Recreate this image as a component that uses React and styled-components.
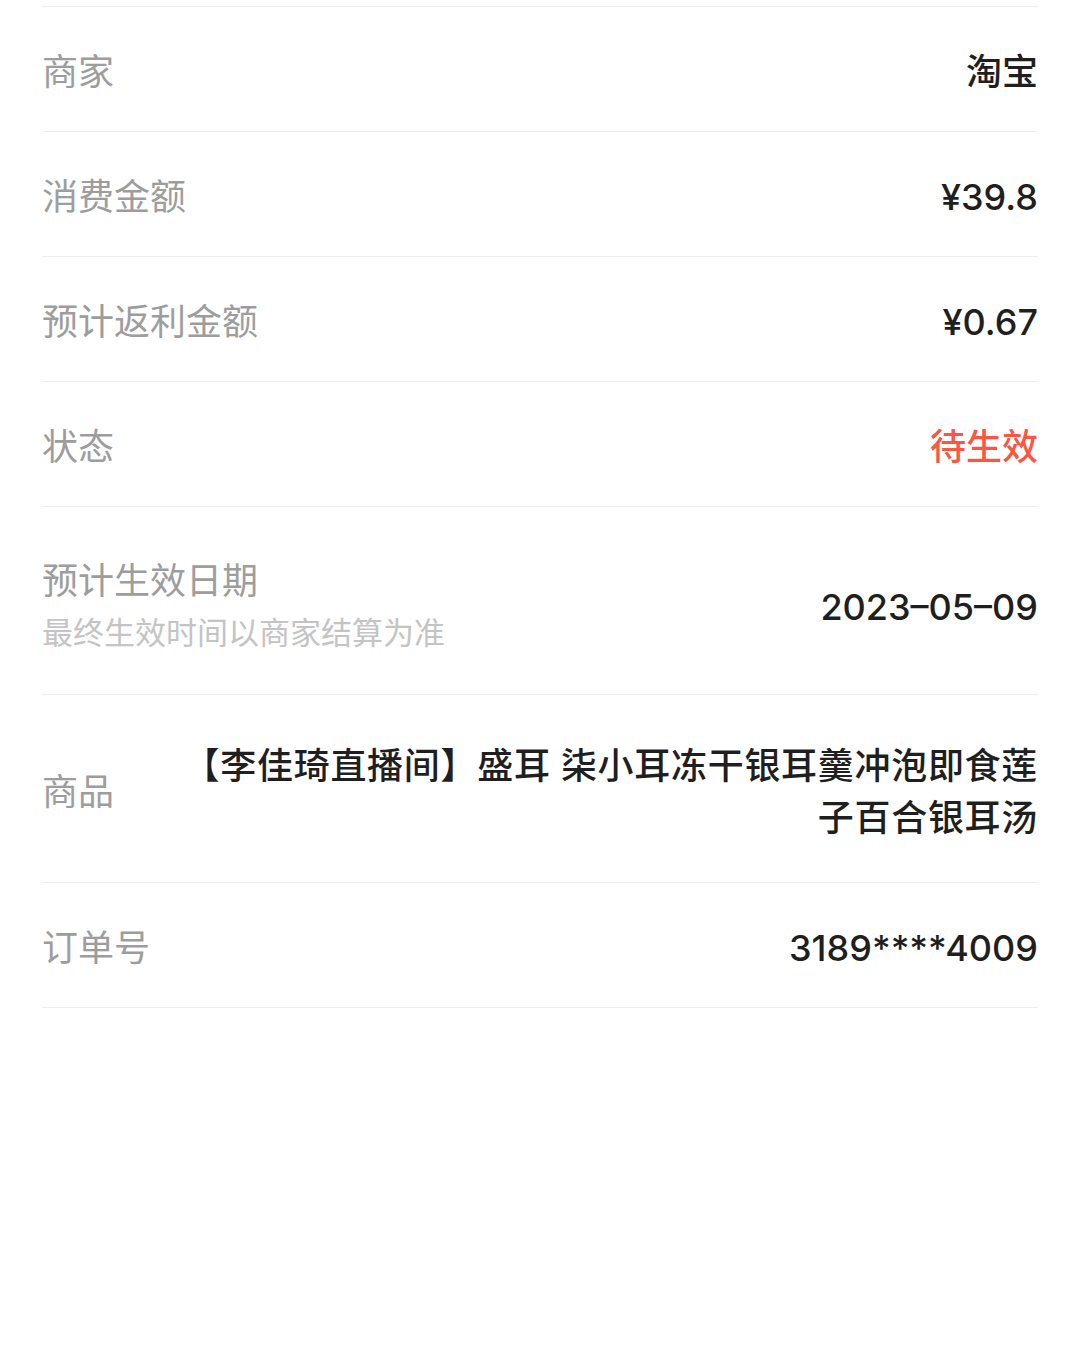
import React from "react";
import styled, { createGlobalStyle } from "styled-components";

const GlobalStyle = createGlobalStyle`
  body {
    margin: 0;
    background: #ffffff;
    font-family: Inter, "Noto Sans CJK SC", sans-serif;
  }
`;

const rows = [
  { label: "商家", value: "淘宝" },
  { label: "消费金额", value: "¥39.8" },
  { label: "预计返利金额", value: "¥0.67" },
  { label: "状态", value: "待生效", tone: "red" },
  {
    label: "预计生效日期",
    hint: "最终生效时间以商家结算为准",
    value: "2023–05–09",
    pad: "48px 0 35px",
  },
  {
    label: "商品",
    value: "【李佳琦直播间】盛耳 柒小耳冻干银耳羹冲泡即食莲子百合银耳汤",
    pad: "45px 0 38px",
    wrap: true,
  },
  { label: "订单号", value: "3189****4009" },
];

function App() {
  return (
    <>
      <GlobalStyle />
      <Page>
        <List>
          {rows.map((row) => (
            <Row key={row.label} $pad={row.pad}>
              <LabelBox>
                <Label>{row.label}</Label>
                {row.hint && <Hint>{row.hint}</Hint>}
              </LabelBox>
              <Value $tone={row.tone} $wrap={row.wrap}>
                {row.value}
              </Value>
            </Row>
          ))}
        </List>
      </Page>
    </>
  );
}

const Page = styled.div`
  padding: 6px 42px 0 42px;
  min-height: 1344px;
  background: #ffffff;
`;

const List = styled.div`
  border-top: 1px solid #ededed;
`;

const Row = styled.div`
  display: flex;
  align-items: center;
  justify-content: space-between;
  gap: 40px;
  box-sizing: border-box;
  min-height: ${(p) => (p.$pad ? "auto" : "125px")};
  padding: ${(p) => p.$pad || "6px 0 0"};
  border-bottom: 1px solid #ededed;
`;

const LabelBox = styled.div`
  display: flex;
  flex-direction: column;
  flex-shrink: 0;
`;

const Label = styled.div`
  font-size: 36px;
  line-height: 52px;
  color: #9d9d9d;
`;

const Hint = styled.div`
  font-size: 31px;
  line-height: 52px;
  color: #c4c4c4;
`;

const Value = styled.div`
  font-size: 36px;
  line-height: 52px;
  font-weight: 500;
  text-align: right;
  color: ${(p) => (p.$tone === "red" ? "#fe5540" : "#1f1f1f")};
  max-width: ${(p) => (p.$wrap ? "860px" : "none")};
  letter-spacing: ${(p) => (p.$wrap ? "0.7px" : "normal")};
`;

export default App;
